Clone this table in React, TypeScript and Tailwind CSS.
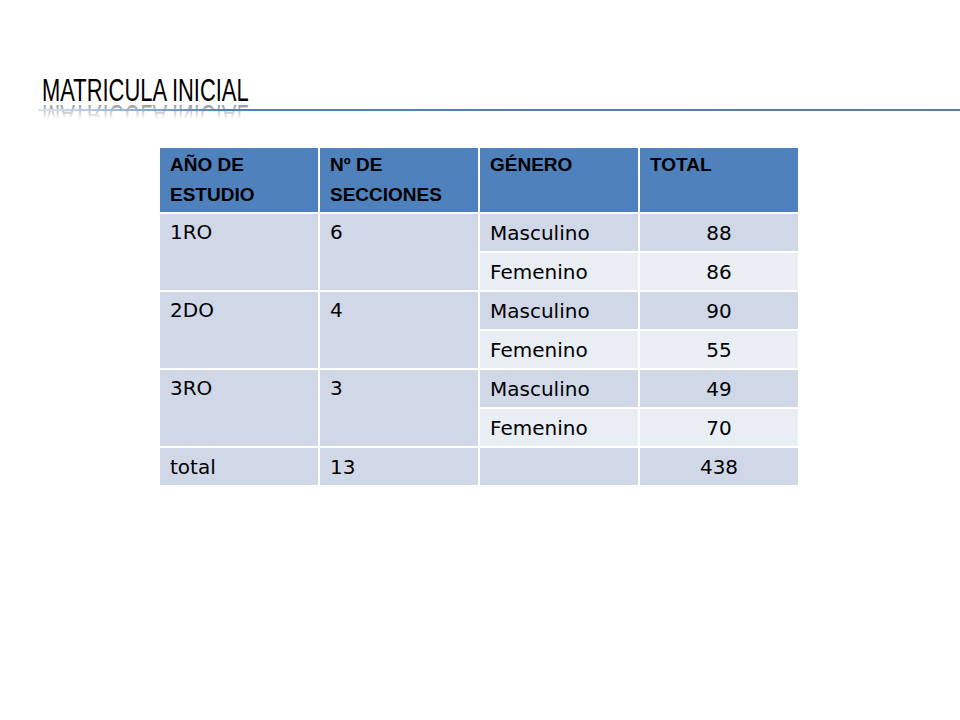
import React from 'react';

const rows = [
  { year: '1RO', sections: '6', items: [['Masculino', '88'], ['Femenino', '86']] },
  { year: '2DO', sections: '4', items: [['Masculino', '90'], ['Femenino', '55']] },
  { year: '3RO', sections: '3', items: [['Masculino', '49'], ['Femenino', '70']] },
];

const body = { fontFamily: '"DejaVu Sans", "Liberation Sans", sans-serif' };
const head = { fontFamily: '"Liberation Sans", Arial, sans-serif' };

export default function App() {
  return (
    <div className="relative h-[720px] w-[960px] overflow-hidden bg-white">
      {/* Título con reflejo */}
      <div className="relative h-[120px] pl-[42px] pt-[74px]">
        <div
          className="origin-left scale-x-[0.685] whitespace-nowrap text-[32px] leading-none text-black"
          style={head}
        >
          MATRICULA INICIAL
        </div>
        <div className="absolute left-[42px] top-[103px] h-[16px] w-[240px] overflow-hidden">
          <div
            className="absolute left-0 top-[-3px] origin-left scale-x-[0.685] -scale-y-100 whitespace-nowrap text-[32px] leading-none text-black opacity-50"
            style={head}
          >
            MATRICULA INICIAL
          </div>
          <div className="absolute inset-0 bg-gradient-to-b from-white/10 to-white" />
        </div>
        <div className="absolute left-[38px] right-0 top-[109px] h-[2px] bg-gradient-to-r from-[#dbe5f3] via-[#4f81bd] via-[20%] to-[#5d7aa6]" />
      </div>

      {/* Tabla */}
      <div className="pl-[158px] pt-[26px]">
        <table className="w-[642px] table-fixed border-collapse text-black">
          <thead>
            <tr className="h-[66px] bg-[#4f81bd]" style={head}>
              {['AÑO DE ESTUDIO', 'Nº DE SECCIONES', 'GÉNERO', 'TOTAL'].map((h) => (
                <th
                  key={h}
                  className="border-2 border-white px-[10px] pt-[2px] align-top text-left text-[19px] font-bold leading-[30px]"
                >
                  {h}
                </th>
              ))}
            </tr>
          </thead>
          <tbody className="text-[20px] leading-[24px]" style={body}>
            {rows.map((r) => (
              <React.Fragment key={r.year}>
                <tr className="h-[39px]">
                  <td rowSpan={2} className="border-2 border-white bg-[#d0d8e8] px-[10px] pt-[6px] align-top">
                    {r.year}
                  </td>
                  <td rowSpan={2} className="border-2 border-white bg-[#d0d8e8] px-[10px] pt-[6px] align-top">
                    {r.sections}
                  </td>
                  <td className="border-2 border-white bg-[#d0d8e8] px-[10px] align-middle">{r.items[0][0]}</td>
                  <td className="border-2 border-white bg-[#d0d8e8] px-[10px] text-center align-middle">{r.items[0][1]}</td>
                </tr>
                <tr className="h-[39px]">
                  <td className="border-2 border-white bg-[#e9edf4] px-[10px] align-middle">{r.items[1][0]}</td>
                  <td className="border-2 border-white bg-[#e9edf4] px-[10px] text-center align-middle">{r.items[1][1]}</td>
                </tr>
              </React.Fragment>
            ))}
            <tr className="h-[39px] bg-[#d0d8e8]">
              <td className="border-2 border-white px-[10px] align-middle">total</td>
              <td className="border-2 border-white px-[10px] align-middle">13</td>
              <td className="border-2 border-white px-[10px] align-middle"></td>
              <td className="border-2 border-white px-[10px] text-center align-middle">438</td>
            </tr>
          </tbody>
        </table>
      </div>
    </div>
  );
}
